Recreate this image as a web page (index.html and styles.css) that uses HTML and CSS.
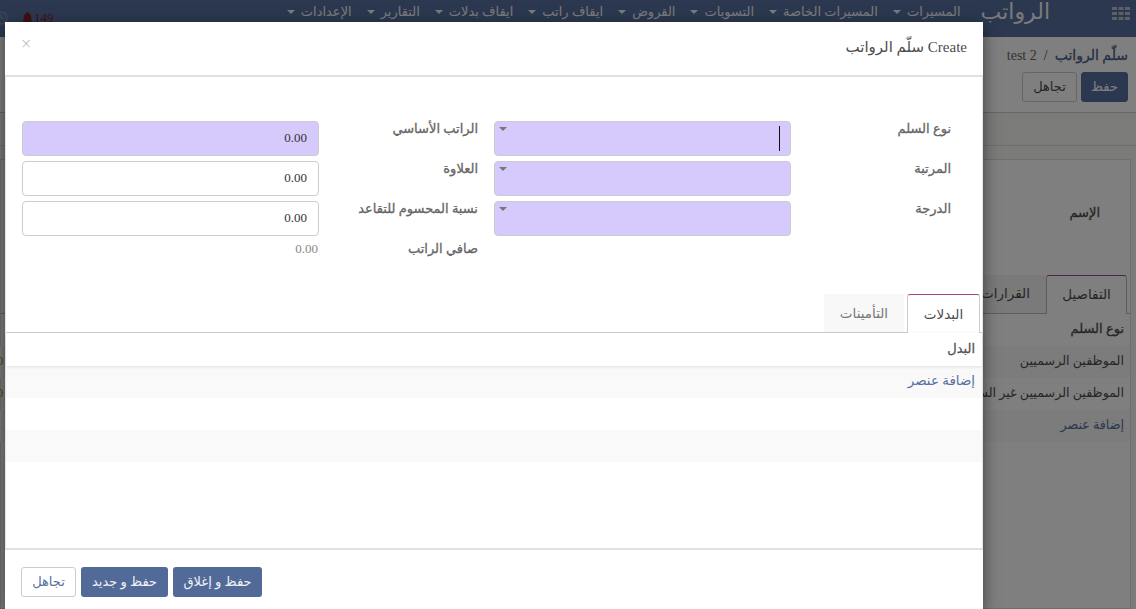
FILE: index.html
```html
<!DOCTYPE html>
<html lang="ar" dir="rtl">
<head>
<meta charset="utf-8">
<title>Create سلّم الرواتب</title>
<link rel="stylesheet" href="styles.css">
</head>
<body>
<div class="page">
  <header class="nav">
    <svg class="apps" viewBox="0 0 18 13" width="18" height="13"><g fill="#b9bfcb"><rect x="0" y="0" width="5" height="3"/><rect x="6.500" y="0" width="5" height="3"/><rect x="13" y="0" width="5" height="3"/><rect x="0" y="5" width="5" height="3"/><rect x="6.500" y="5" width="5" height="3"/><rect x="13" y="5" width="5" height="3"/><rect x="0" y="10" width="5" height="3"/><rect x="6.500" y="10" width="5" height="3"/><rect x="13" y="10" width="5" height="3"/></g></svg>
    <span class="brand">الرواتب</span>
    <nav class="menu">
      <span class="menu-item">المسيرات</span>
      <span class="menu-item">المسيرات الخاصة</span>
      <span class="menu-item">التسويات</span>
      <span class="menu-item">القروض</span>
      <span class="menu-item">ايقاف راتب</span>
      <span class="menu-item">ايقاف بدلات</span>
      <span class="menu-item">التقارير</span>
      <span class="menu-item">الإعدادات</span>
    </nav>
    <div class="systray">
      <span class="alert"><svg viewBox="0 0 12 14" width="11" height="13"><path fill="#7c1f2b" d="M6 0a1.2 1.2 0 0 1 1.2 1.3C9.300 1.900 10 3.800 10 6c0 3 1 4.500 2 5.500V12H0v-.5C1 10.500 2 9 2 6c0-2.200.7-4.100 2.800-4.700A1.200 1.200 0 0 1 6 0zM4.500 12.500h3a1.500 1.500 0 0 1-3 0z"/></svg><span dir="ltr">149</span></span>
      <svg class="clock" viewBox="0 0 14 14" width="14" height="14"><circle cx="7" cy="7" r="6" fill="none" stroke="#8a93a5" stroke-width="1.200"/><path d="M7 3.500V7h3" fill="none" stroke="#8a93a5" stroke-width="1.200"/></svg>
    </div>
  </header>

  <section class="panel">
    <div class="crumbs"><span class="crumb-link">سلّم الرواتب</span><span class="crumb-sep">/</span><span class="crumb-now" dir="ltr">test 2</span></div>
    <div class="panel-btns"><span class="pbtn pbtn-primary">حفظ</span><span class="pbtn">تجاهل</span></div>
  </section>
  <div class="status"></div>

  <main class="sheet-wrap">
    <div class="sheet">
      <div class="sheet-name">الإسم</div>
      <div class="bg-tabs">
        <span class="bg-tab bg-tab-on">التفاصيل</span>
        <span class="bg-tab">القرارات</span>
      </div>
      <div class="bg-row bg-head"><span class="bg-title">نوع السلم</span></div>
      <div class="bg-row bg-odd"><span>الموظفين الرسميين</span><span class="bg-num">0</span></div>
      <div class="bg-row"><span>الموظفين الرسميين غير السعوديين</span><span class="bg-num">0</span></div>
      <div class="bg-row bg-odd"><span class="bg-link">إضافة عنصر</span></div>
    </div>
  </main>
</div>

<div class="backdrop"></div>

<div class="modal">
  <div class="modal-head">
    <h4 class="modal-title">Create سلّم الرواتب</h4>
    <span class="close">×</span>
  </div>
  <div class="modal-body">
    <div class="form">
      <label class="lbl">نوع السلم</label>
      <div class="field req sel"><span class="cursor"></span></div>
      <label class="lbl lbl-2">الراتب الأساسي</label>
      <div class="field req num">0.00</div>

      <label class="lbl">المرتبة</label>
      <div class="field req sel"></div>
      <label class="lbl lbl-2">العلاوة</label>
      <div class="field num">0.00</div>

      <label class="lbl">الدرجة</label>
      <div class="field req sel"></div>
      <label class="lbl lbl-2">نسبة المحسوم للتقاعد</label>
      <div class="field num">0.00</div>

      <span class="spacer"></span>
      <span class="spacer"></span>
      <label class="lbl lbl-2">صافي الراتب</label>
      <div class="net">0.00</div>
    </div>

    <div class="tabs">
      <span class="tab tab-on">البدلات</span>
      <span class="tab">التأمينات</span>
    </div>
    <div class="thead">البدل</div>
    <div class="trow trow-odd"><a class="add">إضافة عنصر</a></div>
    <div class="trow"></div>
    <div class="trow trow-odd"></div>
  </div>
  <div class="modal-foot">
    <span class="btn btn-primary">حفظ و إغلاق</span>
    <span class="btn btn-primary">حفظ و جديد</span>
    <span class="btn btn-plain">تجاهل</span>
  </div>
</div>
</body>
</html>
```
FILE: styles.css
```css
* { box-sizing: border-box; }
html, body { margin: 0; height: 100%; overflow: hidden; }
body {
  font-family: "Liberation Serif", "DejaVu Sans", serif;
  font-size: 13px;
  line-height: 18px;
  color: #4c4c4c;
  background: #fff;
}
.page { height: 609px; display: flex; flex-direction: column; overflow: hidden; }

/* navbar */
.nav {
  height: 37px;
  flex: none;
  background: #56709f;
  display: flex;
  align-items: flex-start;
  padding-right: 6px;
  color: #fff;
}
.apps { margin-top: 7px; margin-left: 62px; flex: none; }
.brand { font-size: 22px; line-height: 30px; margin-left: 20px; margin-top: -3px; color: #f4f5f8; white-space: nowrap; }
.menu { display: flex; gap: 15px; margin-top: 3px; }
.menu-item { display: flex; align-items: center; gap: 6px; color: #f4f5f8; height: 18px; white-space: nowrap; }
.menu-item::after {
  content: "";
  width: 0; height: 0;
  border-left: 4px solid transparent;
  border-right: 4px solid transparent;
  border-top: 4px solid #f4f5f8;
}
.systray { margin-right: auto; display: flex; align-items: center; gap: 14px; margin-left: -6px; margin-top: 9px; }
.alert { display: flex; align-items: center; color: #7c1f2b; flex-direction: row-reverse; gap: 1px; }

/* control panel */
.panel { height: 76px; flex: none; padding: 0 8px 0 0; border-bottom: 1px solid #ccc; }
.crumbs { margin-top: 9px; height: 20px; display: flex; align-items: center; gap: 7px; font-size: 14px; }
.crumb-link { color: #4c5f86; -webkit-text-stroke: 0.3px #4c5f86; }
.crumb-now { color: #666; font-size: 14px; }
.panel-btns { display: flex; gap: 4px; margin-top: 6px; }
.pbtn { width: 55px; height: 30px; border: 1px solid #ccc; border-radius: 3px; display: flex; align-items: center; justify-content: center; color: #4c4c4c; }
.pbtn-primary { width: 47px; background: #56709f; border-color: #56709f; color: #fff; }
.status { height: 33px; flex: none; background: #f6f6f2; border-bottom: 1px solid #ddd; }

/* sheet behind the dialog */
.sheet-wrap { flex: 1; background: #f6f6f2; padding: 13px 5px 0 0; }
.sheet { height: 100%; background: #fff; border: 1px solid #ddd; padding-top: 44px; }
.sheet-name { font-size: 13px; -webkit-text-stroke: 0.3px #4c4c4c; padding-right: 30px; height: 71px; }
.bg-tabs { display: flex; height: 39px; padding-right: 3px; border-bottom: 1px solid #bbb; }
.bg-tab { width: 81px; padding-top: 10px; text-align: center; font-size: 13.5px; background: #f4f4f4; }
.bg-tab-on { background: #fff; border: 1px solid #bbb; border-top-color: #a24689; border-bottom: 0; border-radius: 3px 3px 0 0; height: 39px; }
.bg-row { height: 32px; display: flex; justify-content: space-between; align-items: center; padding: 0 6px 2px 0; margin-left: -1px; font-size: 12.7px; }
.bg-odd { background: #f9f9f9; }
.bg-title { font-size: 13px; -webkit-text-stroke: 0.3px #4c4c4c; }
.bg-link { color: #56709f; }
.bg-num { color: #a8842f; margin-left: -3px; }

.backdrop { position: absolute; inset: 0; background: rgba(0, 0, 0, 0.5); }

/* dialog */
.modal {
  position: absolute;
  top: 22px;
  left: 5px;
  width: 978px;
  height: 587px;
  background: #fff;
  display: flex;
  flex-direction: column;
  box-shadow: 0 5px 15px rgba(0, 0, 0, 0.5);
}
.modal-head {
  height: 55px;
  flex: none;
  padding: 16px 16px 0;
  display: flex;
  justify-content: space-between;
  border-bottom: 2px solid #e0e0e0;
}
.modal-title { margin: 0; font-size: 15px; font-weight: normal; line-height: 18px; color: #4c4c4c; }
.close { color: #bfbfbf; font-size: 18px; line-height: 10px; margin-top: 1px; }
.modal-body { flex: 1; border: 1px solid #e4e4e4; border-top: 0; border-bottom: 0; padding-top: 44px; }
.form {
  display: grid;
  grid-template-columns: 160px 297px 175px 297px;
  grid-auto-rows: 35px;
  row-gap: 5px;
  padding-right: 31px;
  padding-left: 16px;
  height: 173px;
}
.lbl { color: #666; font-size: 13px; line-height: 16px; -webkit-text-stroke: 0.3px #666; }
.lbl-2 { margin-right: 16px; }
.spacer { height: 1px; }
.field {
  position: relative;
  border: 1px solid #ccc;
  border-radius: 4px;
  background: #fff;
  font-size: 13px;
  color: #333;
  display: flex;
  align-items: center;
  padding-bottom: 2px;
}
.req { background: #d6c9fb; }
.num { padding-right: 11px; }
.sel::after {
  content: "";
  position: absolute;
  top: 5px;
  left: 4px;
  border-left: 4px solid transparent;
  border-right: 4px solid transparent;
  border-top: 4px solid #777;
}
.cursor { position: absolute; right: 10px; top: 4px; width: 1px; height: 25px; background: #111; }
.net { color: #888; font-size: 13px; line-height: 16px; padding-right: 1px; }

.tabs { display: flex; height: 39px; padding-right: 2px; border-bottom: 1px solid #ccc; gap: 3px; }
.tab { width: 80px; padding-top: 11px; text-align: center; background: #f8f8f8; color: #777; border-radius: 3px 3px 0 0; font-size: 13.5px; }
.tab-on {
  width: 73px;
  background: #fff;
  color: #4c4c4c;
  height: 39px;
  border: 1px solid #ccc;
  border-top-color: #a24689;
  border-bottom: 0;
}
.thead { height: 33px; padding: 7px 7px 0 0; font-size: 13px; color: #555; -webkit-text-stroke: 0.3px #555; box-shadow: 0 1px 3px rgba(0, 0, 0, 0.1); position: relative; }
.trow { height: 32px; padding: 6px 7px 0 0; }
.trow-odd { background: #f9f9f9; }
.add { color: #56709f; font-size: 13.4px; }

.modal-foot {
  height: 61px;
  flex: none;
  border-top: 2px solid #e0e0e0;
  display: flex;
  gap: 5px;
  padding-top: 17px;
  padding-right: 721px;
}
.btn { height: 30px; border-radius: 3px; display: flex; align-items: center; justify-content: center; padding: 0 10px; white-space: nowrap; }
.btn-primary { width: 89px; background: #526a98; color: #eef1f6; }
.btn-primary + .btn-primary { width: 87px; }
.btn-plain { width: 55px; border: 1px solid #ccc; color: #56709f; background: #fff; }
```
